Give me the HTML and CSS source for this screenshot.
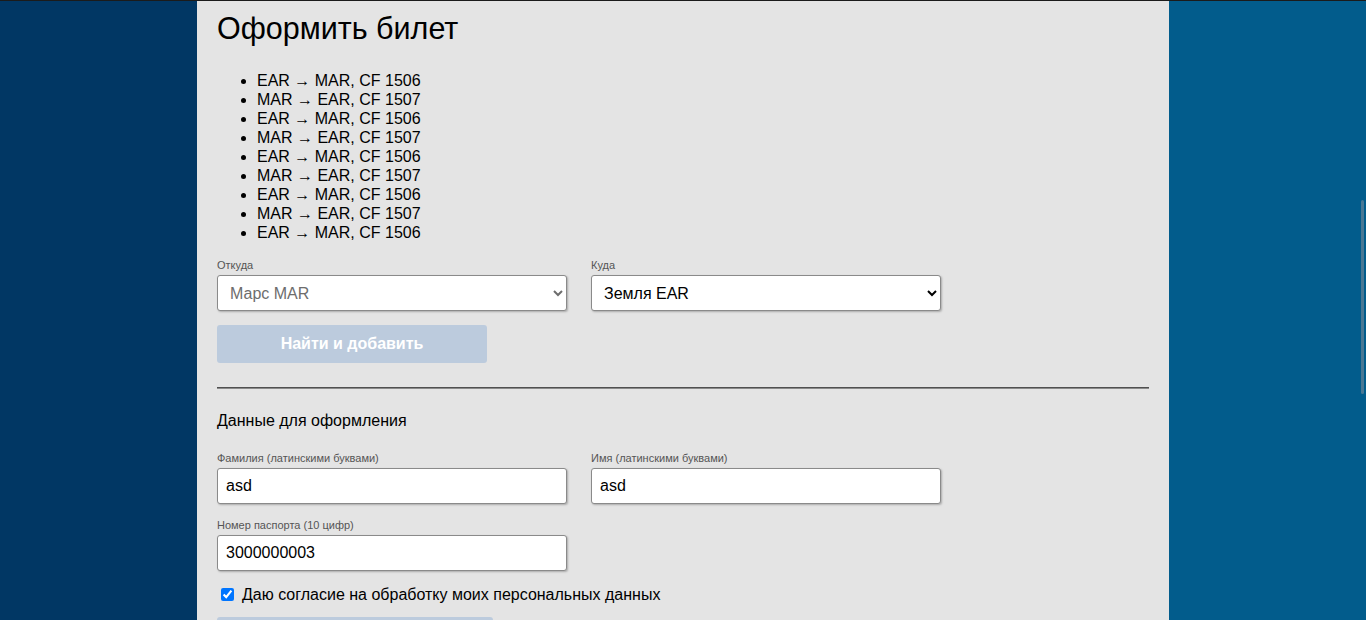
FILE: index.html
```html
<!DOCTYPE html>
<html lang="ru">
<head>
<meta charset="utf-8">
<title>Оформить билет</title>
<link rel="stylesheet" href="styles.css">
</head>
<body>
<div class="page">
  <div class="side side-left"></div>
  <main class="panel">
    <h1 class="title">Оформить билет</h1>
    <ul class="flights">
      <li>EAR → MAR, CF 1506</li>
      <li>MAR → EAR, CF 1507</li>
      <li>EAR → MAR, CF 1506</li>
      <li>MAR → EAR, CF 1507</li>
      <li>EAR → MAR, CF 1506</li>
      <li>MAR → EAR, CF 1507</li>
      <li>EAR → MAR, CF 1506</li>
      <li>MAR → EAR, CF 1507</li>
      <li>EAR → MAR, CF 1506</li>
    </ul>
    <div class="row row-route">
      <label class="field">
        <span class="label">Откуда</span>
        <select class="control" disabled>
          <option>Марс MAR</option>
        </select>
      </label>
      <label class="field">
        <span class="label">Куда</span>
        <select class="control">
          <option>Земля EAR</option>
          <option>Марс MAR</option>
        </select>
      </label>
    </div>
    <button class="btn btn-find" type="button" disabled>Найти и добавить</button>
    <div class="divider"></div>
    <h2 class="subtitle">Данные для оформления</h2>
    <div class="row row-name">
      <label class="field">
        <span class="label">Фамилия (латинскими буквами)</span>
        <input class="control" type="text" value="asd">
      </label>
      <label class="field">
        <span class="label">Имя (латинскими буквами)</span>
        <input class="control" type="text" value="asd">
      </label>
    </div>
    <div class="row row-passport">
      <label class="field">
        <span class="label">Номер паспорта (10 цифр)</span>
        <input class="control" type="text" value="3000000003">
      </label>
    </div>
    <label class="consent">
      <input type="checkbox" checked>
      <span>Даю согласие на обработку моих персональных данных</span>
    </label>
    <button class="btn btn-submit" type="button" disabled>Оформить</button>
  </main>
  <div class="side side-right"></div>
</div>
<div class="scroll-thumb"></div>
</body>
</html>
```

FILE: styles.css
```css
html, body {
  margin: 0;
  padding: 0;
  height: 100%;
  overflow: hidden;
}

body {
  font-family: "Liberation Sans", Arial, sans-serif;
  color: #000;
  background: #025c8c;
}

.page {
  display: flex;
  min-height: 620px;
  border-top: 1px solid #1b1b1b;
  box-sizing: border-box;
}

.side {
  flex: 1 1 0;
}

.side-left {
  background: #013764;
}

.side-right {
  background: #025c8c;
}

.panel {
  flex: 0 0 972px;
  box-sizing: border-box;
  background: #e4e4e4;
  padding: 0 20px 0 20px;
}

.title {
  font-size: 30.5px;
  font-weight: normal;
  line-height: 36px;
  margin: 9px 0 0 0;
}

.flights {
  margin: 25px 0 0 0;
  padding-left: 40px;
  font-size: 16px;
  line-height: 19px;
}

.row {
  display: flex;
  gap: 24px;
}

.row-route {
  margin-top: 16px;
}

.row-name {
  margin-top: 21px;
}

.row-passport {
  margin-top: 14px;
}

.field {
  display: flex;
  flex-direction: column;
  width: 350px;
}

.label {
  font-size: 11px;
  line-height: 14px;
  color: #555;
  margin-bottom: 3px;
}

.control {
  box-sizing: border-box;
  width: 350px;
  height: 36px;
  font-family: "Liberation Sans", Arial, sans-serif;
  font-size: 16px;
  color: #000;
  background: #fff;
  border: 1px solid #8a8a8a;
  border-radius: 3px;
  box-shadow: 1px 1px 2px rgba(0, 0, 0, 0.25);
  padding: 0 8px;
  margin: 0;
}

select.control {
  padding-left: 8px;
}

select.control:disabled {
  color: #6d6d6d;
  background: #fff;
  opacity: 1;
}

.btn {
  display: block;
  box-sizing: border-box;
  height: 38px;
  border: none;
  border-radius: 3px;
  background: #bccbdd;
  color: #fff;
  font-family: "Liberation Sans", Arial, sans-serif;
  font-size: 16px;
  font-weight: bold;
  padding: 0;
}

.btn-find {
  width: 270px;
  margin-top: 14px;
}

.divider {
  margin-top: 24px;
  height: 1px;
  background: #505050;
  border-bottom: 1px solid #8a8a8a;
}

.subtitle {
  font-size: 16px;
  font-weight: normal;
  line-height: 19px;
  margin: 22px 0 0 0;
}

.consent {
  display: flex;
  align-items: center;
  margin-top: 14px;
  font-size: 16px;
  line-height: 19px;
}

.consent input {
  margin: 0 8px 0 4px;
  width: 13px;
  height: 13px;
}

.btn-submit {
  width: 276px;
  margin-top: 13px;
  color: #fff;
}

.scroll-thumb {
  position: fixed;
  right: 2px;
  top: 200px;
  width: 3px;
  height: 194px;
  border-radius: 2px;
  background: #4a7894;
}
```
